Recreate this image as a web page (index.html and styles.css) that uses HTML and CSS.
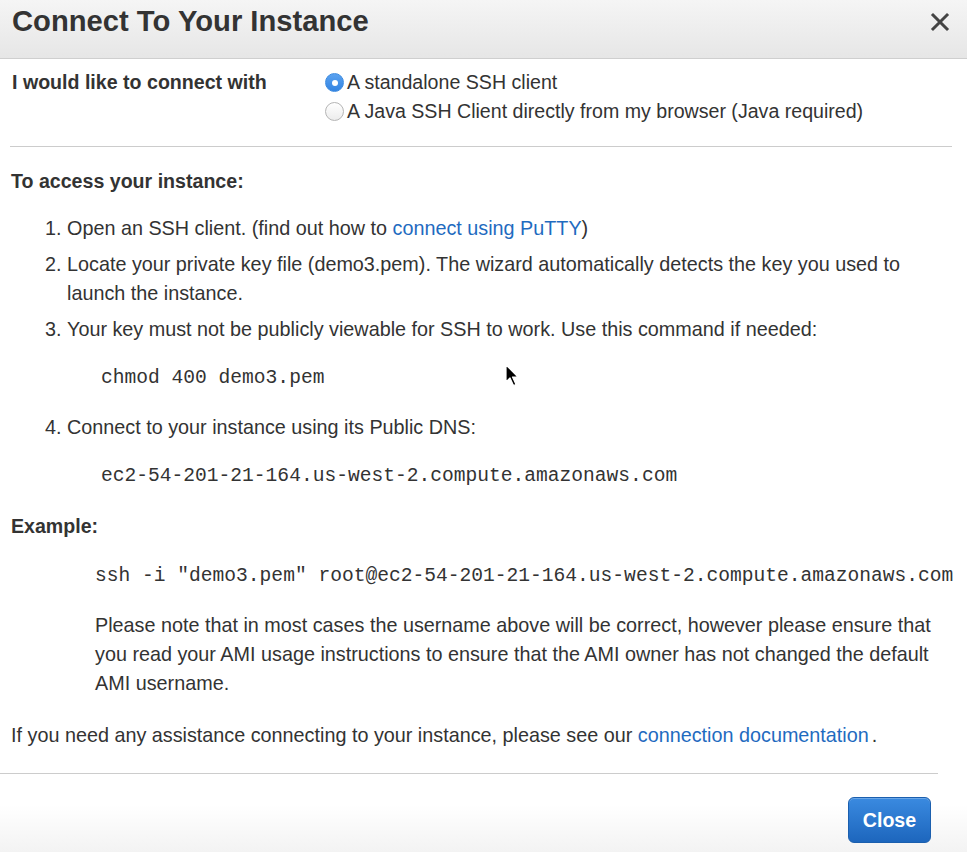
FILE: index.html
```html
<!DOCTYPE html>
<html lang="en">
<head>
<meta charset="utf-8">
<title>Connect To Your Instance</title>
<link rel="stylesheet" href="styles.css">
</head>
<body>
<div class="modal">
  <div class="modal-header">
    <h1 class="title">Connect To Your Instance</h1>
    <button class="close-x" aria-label="Close">
      <svg width="20" height="20" viewBox="0 0 20 20"><path d="M3 3 L17 17 M17 3 L3 17" stroke="#444" stroke-width="3" stroke-linecap="square" fill="none"/></svg>
    </button>
  </div>
  <div class="modal-body">
    <div class="connect-row">
      <div class="connect-label">I would like to connect with</div>
      <div class="options">
        <label class="option"><span class="radio checked"></span>A standalone SSH client</label>
        <label class="option"><span class="radio"></span>A Java SSH Client directly from my browser (Java required)</label>
      </div>
    </div>
    <div class="sep"></div>
    <h2 class="section-title">To access your instance:</h2>
    <ol class="steps">
      <li>Open an SSH client. (find out how to <a class="link" href="#">connect using PuTTY</a>)</li>
      <li>Locate your private key file (demo3.pem). The wizard automatically detects the key you used to launch the instance.</li>
      <li>Your key must not be publicly viewable for SSH to work. Use this command if needed:
        <div class="code">chmod 400 demo3.pem</div>
      </li>
      <li>Connect to your instance using its Public DNS:
        <div class="code">ec2-54-201-21-164.us-west-2.compute.amazonaws.com</div>
      </li>
    </ol>
    <h2 class="section-title example-title">Example:</h2>
    <div class="example">
      <div class="code code-example">ssh -i "demo3.pem" root@ec2-54-201-21-164.us-west-2.compute.amazonaws.com</div>
      <p class="note">Please note that in most cases the username above will be correct, however please ensure that you read your AMI usage instructions to ensure that the AMI owner has not changed the default AMI username.</p>
    </div>
    <p class="help">If you need any assistance connecting to your instance, please see our <a class="link" href="#">connection documentation</a><span class="dot">.</span></p>
  </div>
  <div class="modal-footer">
    <div class="footer-sep"></div>
    <div class="footer-actions">
      <button class="btn-close">Close</button>
    </div>
  </div>
  <svg class="cursor" width="16" height="24" viewBox="0 0 16 24"><path d="M1 1 L1 18 L5 14 L8.5 21.5 L11 20.5 L7.5 13 L13 13 Z" fill="#000" stroke="#fff" stroke-width="1.2" stroke-linejoin="round"/></svg>
</div>
</body>
</html>
```

FILE: styles.css
```css
* { box-sizing: border-box; }

html, body {
  margin: 0;
  padding: 0;
  background: #ffffff;
}

body {
  font-family: "Liberation Sans", Arial, Helvetica, sans-serif;
  color: #333333;
  font-size: 19.8px;
  line-height: 29px;
}

.modal {
  position: relative;
  width: 967px;
  min-height: 852px;
  display: flex;
  flex-direction: column;
}

.modal-header {
  height: 59px;
  display: flex;
  justify-content: space-between;
  align-items: flex-start;
  padding: 4px 17px 0 12px;
  background: linear-gradient(#f5f5f5, #e6e6e6);
  border-bottom: 1px solid #cfcfcf;
}

.title {
  margin: 0;
  font-size: 29.2px;
  line-height: 34px;
  font-weight: bold;
  color: #333333;
}

.close-x {
  margin-top: 8px;
  padding: 0;
  border: 0;
  background: none;
  width: 20px;
  height: 20px;
  display: flex;
}

.modal-body {
  padding: 0 11px;
  flex: 1;
}

.connect-row {
  display: grid;
  grid-template-columns: 314px 1fr;
  margin-top: 9px;
}

.connect-label {
  font-weight: bold;
  padding-left: 1px;
  font-size: 19.6px;
}

.options {
  display: flex;
  flex-direction: column;
}

.option {
  display: flex;
  align-items: center;
  font-size: 19.6px;
}

.radio {
  width: 19px;
  height: 19px;
  border-radius: 50%;
  border: 1px solid #b5b5b5;
  background: linear-gradient(#ffffff, #ececec);
  margin-right: 3px;
  flex: none;
  display: flex;
  align-items: center;
  justify-content: center;
}

.radio.checked {
  border-color: #3c8be0;
  background: linear-gradient(#5aa2f0, #3384e2);
}

.radio.checked::after {
  content: "";
  width: 6px;
  height: 6px;
  border-radius: 50%;
  background: #ffffff;
}

.sep {
  margin: 20px 4px 0 -1px;
  border-top: 1px solid #cccccc;
}

.section-title {
  margin: 20px 0 0;
  font-size: 19.6px;
  line-height: 29px;
  font-weight: bold;
}

.steps {
  margin: 18px 30px 0 0;
  padding-left: 56px;
}

.steps li {
  margin-top: 7px;
}

.steps li:first-child {
  margin-top: 0;
}

.link {
  color: #1f6bbf;
  text-decoration: none;
}

.code {
  font-family: "Liberation Mono", "DejaVu Sans Mono", monospace;
  font-size: 19.6px;
  line-height: 29px;
  color: #333333;
  margin: 20px 0;
  padding-left: 34px;
  white-space: nowrap;
}

.example-title {
  margin-top: 21px;
}

.example {
  padding-left: 84px;
}

.code-example {
  padding-left: 0;
  margin: 21px 0 0;
  font-size: 19.6px;
}

.note {
  margin: 20px 0 0;
}

.help {
  margin: 23px 0 0;
}

.dot {
  margin-left: 3px;
}

.modal-footer {
  margin-top: 22px;
  background: linear-gradient(#ffffff 40%, #f3f3f3);
}

.footer-sep {
  margin-right: 29px;
  border-top: 1px solid #cccccc;
}

.footer-actions {
  display: flex;
  justify-content: flex-end;
  padding: 23px 36px 9px 0;
}

.btn-close {
  width: 83px;
  height: 46px;
  border-radius: 6px;
  border: 1px solid #1b5fae;
  background: linear-gradient(#3a8ae0, #1d66bd);
  color: #ffffff;
  font-family: "Liberation Sans", Arial, sans-serif;
  font-size: 19.6px;
  font-weight: bold;
  padding: 0;
  box-shadow: inset 0 1px 0 rgba(255,255,255,0.25);
}

.cursor {
  position: absolute;
  left: 505px;
  top: 364px;
}
```
